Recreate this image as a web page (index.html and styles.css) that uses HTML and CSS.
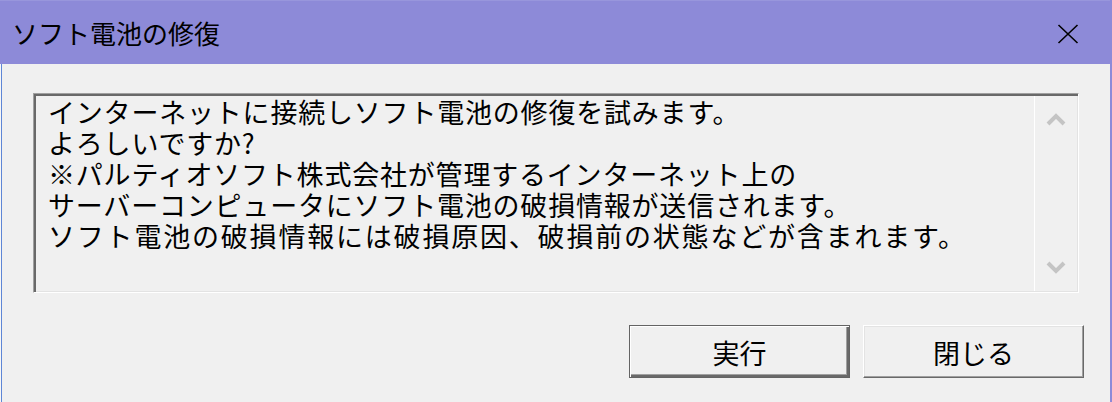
FILE: index.html
```html
<!DOCTYPE html>
<html lang="ja">
  <head>
    <meta charset="UTF-8" />
    <title>ソフト電池の修復</title>
    <link rel="stylesheet" href="styles.css">
  </head>

  <body>
    <div class="window">
      <div class="titlebar">
        <span class="title">ソフト電池の修復</span>
        <svg class="close" width="22" height="20" viewBox="0 0 22 20">
          <path d="M1.5 1 L20.5 19 M20.5 1 L1.5 19" stroke="#000" stroke-width="1.6" fill="none" />
        </svg>
      </div>

      <div class="client">
        <div class="memo">
          <div class="memo-text">
            <p>インターネットに接続しソフト電池の修復を試みます。</p>
            <p>よろしいですか?</p>
            <p>※パルティオソフト株式会社が管理するインターネット上の</p>
            <p>サーバーコンピュータにソフト電池の破損情報が送信されます。</p>
            <p class="wide">ソフト電池の破損情報には破損原因、破損前の状態などが含まれます。</p>
          </div>
          <div class="scroll">
            <div class="arrow">
              <svg width="20" height="14" viewBox="0 0 20 14">
                <path d="M2 12 L10 4 L18 12" stroke="#c4c4c4" stroke-width="4" fill="none" />
              </svg>
            </div>
            <div class="arrow">
              <svg width="20" height="14" viewBox="0 0 20 14">
                <path d="M2 2 L10 10 L18 2" stroke="#c4c4c4" stroke-width="4" fill="none" />
              </svg>
            </div>
          </div>
        </div>

        <div class="buttons">
          <button class="btn default">実行</button>
          <button class="btn">閉じる</button>
        </div>
      </div>
    </div>
  </body>
</html>
```

FILE: styles.css
```css
* {
  padding: 0px;
  margin: 0px;
  box-sizing: border-box;
}

html,
body {
  width: 100%;
  height: 100%;
  background: #f0f0f0;
}

body {
  font-family: "Noto Sans CJK JP", "Liberation Sans", sans-serif;
  color: #000;
}

.window {
  width: 1112px;
  height: 402px;
  display: flex;
  flex-direction: column;
  border-right: 2px solid #8d8ad8;
}

/* タイトルバー */
.titlebar {
  height: 64px;
  background: #8d8ad8;
  border-top: 1px solid #9896dc;
  display: flex;
  align-items: center;
  justify-content: space-between;
  padding: 1px 31px 0 12px;
}

.title {
  font-size: 26px;
  line-height: 30px;
}

.close {
  display: block;
  margin-top: 1px;
}

/* 本体 */
.client {
  flex: 1;
  display: flex;
  flex-direction: column;
  border-left: 1px solid #f7f7f7;
  box-shadow: inset 1px 0 0 #5e86d6;
  padding: 29px 31px 0 32px;
}

.memo {
  height: 200px;
  display: flex;
  border: 1px solid;
  border-color: #a0a0a0 #ffffff #ffffff #a0a0a0;
  box-shadow: inset 2px 2px 0 #696969, inset -1px -1px 0 #e3e3e3;
  padding: 2px 1px 1px 2px;
}

.memo-text {
  flex: 1;
  padding: 0 0 0 12px;
  font-size: 27px;
  line-height: 31px;
  letter-spacing: 0.8px;
  white-space: nowrap;
}

.memo-text .wide {
  letter-spacing: 1.8px;
}

.scroll {
  width: 43px;
  border-left: 1px solid #ffffff;
  display: flex;
  flex-direction: column;
  justify-content: space-between;
}

.arrow {
  height: 46px;
  display: flex;
  align-items: center;
  justify-content: center;
}

.arrow svg {
  display: block;
}

/* ボタン */
.buttons {
  display: flex;
  justify-content: flex-end;
  gap: 13px;
  margin-top: 32px;
  margin-right: -5px;
}

.btn {
  width: 221px;
  height: 53px;
  font-family: "Noto Sans CJK JP", "Liberation Sans", sans-serif;
  font-size: 27px;
  color: #000;
  background: #f0f0f0;
  border: 1px solid;
  border-color: #ffffff #696969 #696969 #ffffff;
  box-shadow: inset -1px -1px 0 #a0a0a0, inset 1px 1px 0 #e3e3e3;
  padding-top: 1px;
}

.btn.default {
  border-color: #646464;
  box-shadow: inset 1px 1px 0 #ffffff, inset -2px -2px 0 #696969, inset -3px -3px 0 #a0a0a0;
}
```
